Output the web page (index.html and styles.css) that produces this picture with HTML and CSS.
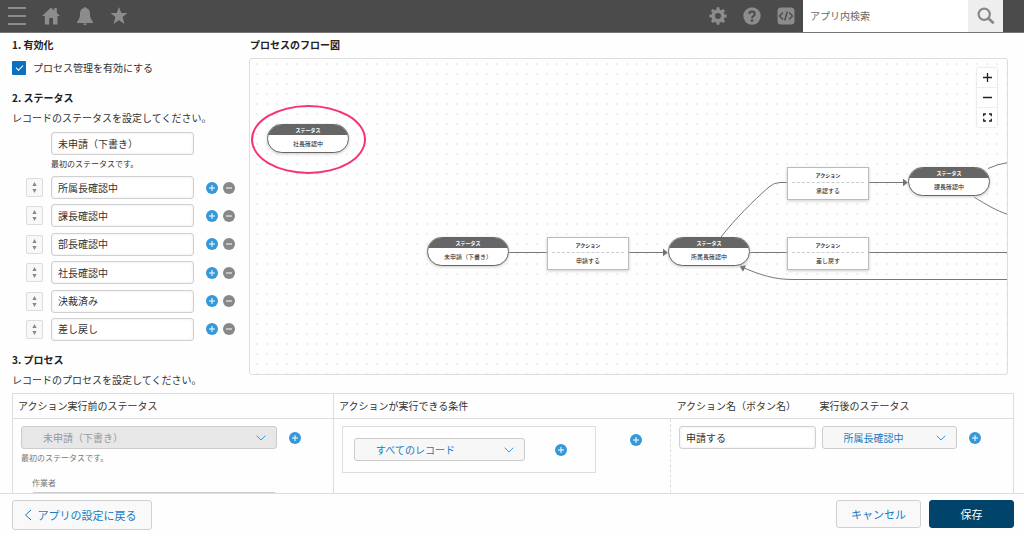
FILE: index.html
```html
<!DOCTYPE html>
<html lang="ja">
<head>
<meta charset="utf-8">
<meta name="viewport" content="width=device-width, initial-scale=1">
<title>プロセス管理</title>
<link rel="stylesheet" href="styles.css">
</head>
<body>
<svg class="defs" width="0" height="0" aria-hidden="true">
  <symbol id="plus" viewBox="0 0 12 12"><circle cx="6" cy="6" r="6" fill="#3498db"/><path d="M6 3v6M3 6h6" stroke="#fff" fill="none"/></symbol>
  <symbol id="minus" viewBox="0 0 12 12"><circle cx="6" cy="6" r="6" fill="#888"/><path d="M3 6h6" stroke="#fff" fill="none"/></symbol>
  <symbol id="sort" viewBox="0 0 17 19"><path d="M6.400 8 8.500 4 10.600 8zM6.400 11 8.500 15 10.600 11z" fill="#888"/></symbol>
  <symbol id="chevron" viewBox="0 0 10 6"><path d="M.7.7 5 5 9.300.7" fill="none" stroke="#3498db"/></symbol>
</svg>

<header class="topbar">
  <nav class="topbar-group" aria-label="メイン">
    <button class="icon-button" aria-label="メニュー"><svg width="18" height="18" viewBox="0 0 18 18"><path d="M0 1h18M0 9h18M0 17h18" stroke="currentColor" stroke-width="2"/></svg></button>
    <button class="icon-button" aria-label="ホーム"><svg width="18" height="18" viewBox="0 0 18 18"><path d="M9 .5 12.200 3.500V1h2.600v4.800L18 9h-2.500v8.500H11V11H7.200v6.500H2.800V9H0z" fill="currentColor"/></svg></button>
    <button class="icon-button" aria-label="通知"><svg width="18" height="18" viewBox="0 0 18 18"><path d="M8 1a1 1 0 0 1 2 0c3 .6 4 3 4 5.500 0 4 1 6 3 8.500v1H1v-1c2-2.500 3-4.500 3-8.500C4 4 5 1.600 8 1zM7.300 16.500h3.400c0 1-.7 1.500-1.700 1.500s-1.700-.5-1.700-1.500z" fill="currentColor"/></svg></button>
    <button class="icon-button" aria-label="お気に入り"><svg width="18" height="18" viewBox="0 0 18 18"><path d="m9 0 2.300 6h6.200l-4.900 4.100 1.900 6.900L9 13.300 3.500 17l1.900-6.900L.5 6h6.200z" fill="currentColor"/></svg></button>
  </nav>
  <div class="topbar-group topbar-tools">
    <button class="icon-button" aria-label="設定"><svg width="18" height="18" viewBox="-9 -9 18 18"><g fill="currentColor"><path d="M-1.800-6-1.300-8.700h2.600L1.800-6zM-1.800 6l.5 2.700h2.600L1.800 6z"/><path transform="rotate(45)" d="M-1.800-6-1.300-8.700h2.600L1.800-6zM-1.800 6l.5 2.700h2.600L1.800 6z"/><path transform="rotate(90)" d="M-1.800-6-1.300-8.700h2.600L1.800-6zM-1.800 6l.5 2.700h2.600L1.800 6z"/><path transform="rotate(135)" d="M-1.800-6-1.300-8.700h2.600L1.800-6zM-1.800 6l.5 2.700h2.600L1.800 6z"/></g><circle r="4.800" fill="none" stroke="currentColor" stroke-width="3.600"/></svg></button>
    <button class="icon-button" aria-label="ヘルプ"><svg width="18" height="18" viewBox="0 0 18 18"><circle cx="9" cy="9" r="8.700" fill="currentColor"/><path d="M6.300 7c0-3.300 5.400-3.300 5.400 0C11.700 9 9 8.900 9 11.200" fill="none" stroke="#4b4b4b" stroke-width="2"/><circle cx="9" cy="13.500" r="1.300" fill="#4b4b4b"/></svg></button>
    <button class="icon-button" aria-label="開発者向け"><svg width="18" height="18" viewBox="0 0 18 18"><rect x=".5" y=".5" width="17" height="17" rx="3.500" fill="currentColor"/><path d="M6 5.500 2.500 9 6 12.500M12 5.500 15.500 9 12 12.500M10.300 4.500 7.700 13.500" fill="none" stroke="#4b4b4b" stroke-width="1.400"/></svg></button>
  </div>
  <form class="search" role="search">
    <input class="search-input" type="search" aria-label="アプリ内検索" placeholder="アプリ内検索">
    <button class="search-button" type="button" aria-label="検索"><svg width="18" height="18" viewBox="0 0 18 18"><circle cx="7.200" cy="7.200" r="5.600" fill="none" stroke="currentColor" stroke-width="2.200"/><path d="m11 11 5.700 5.300" stroke="currentColor" stroke-width="2.800"/></svg></button>
  </form>
</header>

<main class="content">
  <div class="overview">
    <div class="settings">
      <h2 class="heading">1. 有効化</h2>
      <label class="enable"><input class="enable-box" type="checkbox" checked>プロセス管理を有効にする</label>
      <h2 class="heading heading-status">2. ステータス</h2>
      <p class="lead">レコードのステータスを設定してください。</p>
      <div class="first-status">
        <input class="text-input" aria-label="最初のステータス" value="未申請（下書き）">
        <p class="note">最初のステータスです。</p>
      </div>
      <ul class="status-list">
        <li class="status-row"><button class="handle" aria-label="並べ替え"><svg width="17" height="19"><use href="#sort"/></svg></button><input class="text-input" aria-label="ステータス 2" value="所属長確認中"><button class="round add" aria-label="追加"><svg width="12" height="12"><use href="#plus"/></svg></button><button class="round" aria-label="削除"><svg width="12" height="12"><use href="#minus"/></svg></button></li>
        <li class="status-row"><button class="handle" aria-label="並べ替え"><svg width="17" height="19"><use href="#sort"/></svg></button><input class="text-input" aria-label="ステータス 3" value="課長確認中"><button class="round add" aria-label="追加"><svg width="12" height="12"><use href="#plus"/></svg></button><button class="round" aria-label="削除"><svg width="12" height="12"><use href="#minus"/></svg></button></li>
        <li class="status-row"><button class="handle" aria-label="並べ替え"><svg width="17" height="19"><use href="#sort"/></svg></button><input class="text-input" aria-label="ステータス 4" value="部長確認中"><button class="round add" aria-label="追加"><svg width="12" height="12"><use href="#plus"/></svg></button><button class="round" aria-label="削除"><svg width="12" height="12"><use href="#minus"/></svg></button></li>
        <li class="status-row"><button class="handle" aria-label="並べ替え"><svg width="17" height="19"><use href="#sort"/></svg></button><input class="text-input" aria-label="ステータス 5" value="社長確認中"><button class="round add" aria-label="追加"><svg width="12" height="12"><use href="#plus"/></svg></button><button class="round" aria-label="削除"><svg width="12" height="12"><use href="#minus"/></svg></button></li>
        <li class="status-row"><button class="handle" aria-label="並べ替え"><svg width="17" height="19"><use href="#sort"/></svg></button><input class="text-input" aria-label="ステータス 6" value="決裁済み"><button class="round add" aria-label="追加"><svg width="12" height="12"><use href="#plus"/></svg></button><button class="round" aria-label="削除"><svg width="12" height="12"><use href="#minus"/></svg></button></li>
        <li class="status-row"><button class="handle" aria-label="並べ替え"><svg width="17" height="19"><use href="#sort"/></svg></button><input class="text-input" aria-label="ステータス 7" value="差し戻し"><button class="round add" aria-label="追加"><svg width="12" height="12"><use href="#plus"/></svg></button><button class="round" aria-label="削除"><svg width="12" height="12"><use href="#minus"/></svg></button></li>
      </ul>
      <h2 class="heading heading-process">3. プロセス</h2>
      <p class="lead">レコードのプロセスを設定してください。</p>
    </div>

    <section class="flow">
      <h2 class="heading">プロセスのフロー図</h2>
      <div class="canvas">
        <svg class="edges" aria-hidden="true">
          <g fill="none" stroke="#777">
            <path d="M259 193.500H298M379 193.500H415M500 193.500H538M619 193.500H758M619 123.500H655"/>
            <path d="M471 178C485 160 503 142 519 128Q524 123.500 530 123.500H538"/>
            <path d="M738 109.500Q748 105 758 103.500M724 138C735 145 747 152 758 155.500"/>
            <path d="M758 220.500H543C524 220.500 511 216 494 209"/>
          </g>
          <path d="M418 193.500 413 189.700v7.600zM658 123.500 653 119.700v7.600zM489.500 207l6.500-.8-3 6.500z" fill="#707070"/>
        </svg>
        <div class="node status n-president"><b class="node-kind">ステータス</b><span class="node-name">社長確認中</span></div>
        <div class="node status n-draft"><b class="node-kind">ステータス</b><span class="node-name">未申請（下書き）</span></div>
        <div class="node action n-apply"><b class="node-kind">アクション</b><span class="node-name">申請する</span></div>
        <div class="node status n-head"><b class="node-kind">ステータス</b><span class="node-name">所属長確認中</span></div>
        <div class="node action n-approve"><b class="node-kind">アクション</b><span class="node-name">承認する</span></div>
        <div class="node action n-return"><b class="node-kind">アクション</b><span class="node-name">差し戻す</span></div>
        <div class="node status n-section"><b class="node-kind">ステータス</b><span class="node-name">課長確認中</span></div>
        <div class="highlight"></div>
        <div class="zoom-controls">
          <button class="zoom-button" aria-label="拡大"><svg width="9" height="9"><path d="M4.500 0v9M0 4.500h9" stroke="#222" stroke-width="1.300"/></svg></button>
          <button class="zoom-button" aria-label="縮小"><svg width="9" height="9"><path d="M0 4.500h9" stroke="#222" stroke-width="1.300"/></svg></button>
          <button class="zoom-button" aria-label="全体表示"><svg width="9" height="9"><path d="M3 1H.7v2.300M6 1h2.300v2.300M3 8H.7V5.700M6 8h2.300V5.700" fill="none" stroke="#222" stroke-width="1.300"/></svg></button>
        </div>
      </div>
    </section>
  </div>

  <table class="process">
    <colgroup><col class="col-before"><col class="col-condition"><col class="col-action"><col></colgroup>
    <thead>
      <tr><th class="ruled">アクション実行前のステータス</th><th>アクションが実行できる条件</th><th>アクション名（ボタン名）</th><th>実行後のステータス</th></tr>
    </thead>
    <tbody>
      <tr>
        <td class="ruled cell-before">
          <div class="line">
            <span class="picker picker-wide"><select aria-label="アクション実行前のステータス" disabled><option>未申請（下書き）</option></select><svg class="chevron" width="10" height="6"><use href="#chevron"/></svg></span>
            <button class="round" aria-label="追加"><svg width="12" height="12"><use href="#plus"/></svg></button>
          </div>
          <p class="note note-soft">最初のステータスです。</p>
          <div class="worker"><p class="note note-soft">作業者</p><div class="worker-box"></div></div>
        </td>
        <td class="cell-condition">
          <div class="line line-top">
            <div class="condition">
              <span class="picker picker-mid"><select aria-label="アクションが実行できる条件"><option>すべてのレコード</option></select><svg class="chevron" width="10" height="6"><use href="#chevron"/></svg></span>
              <button class="round" aria-label="条件を追加"><svg width="12" height="12"><use href="#plus"/></svg></button>
            </div>
            <button class="round condition-add" aria-label="追加"><svg width="12" height="12"><use href="#plus"/></svg></button>
          </div>
        </td>
        <td class="cell-action"><input class="text-input action-input" aria-label="アクション名（ボタン名）" value="申請する"></td>
        <td class="cell-after">
          <div class="line">
            <span class="picker picker-small"><select aria-label="実行後のステータス"><option>所属長確認中</option></select><svg class="chevron" width="10" height="6"><use href="#chevron"/></svg></span>
            <button class="round" aria-label="追加"><svg width="12" height="12"><use href="#plus"/></svg></button>
          </div>
        </td>
      </tr>
    </tbody>
  </table>
</main>

<footer class="footer">
  <button class="button button-back"><svg width="8" height="12"><path d="M7 1 1.500 6 7 11" fill="none" stroke="currentColor"/></svg>アプリの設定に戻る</button>
  <button class="button">キャンセル</button>
  <button class="button button-primary">保存</button>
</footer>
</body>
</html>
```
FILE: styles.css
```css
* { box-sizing: border-box; }

body {
  display: flex;
  flex-direction: column;
  height: 100vh;
  margin: 0;
  overflow: hidden;
  background: #fefefe;
  color: #333;
  font: 10px/14px "Noto Sans CJK JP", sans-serif;
}

h2, p, ul { margin: 0; padding: 0; }
button, input, select { margin: 0; padding: 0; border: 0; font: inherit; color: inherit; }
button { background: none; }
svg { display: block; flex: none; }
.defs { position: absolute; }

/* Top bar */
.topbar {
  display: flex;
  flex: none;
  height: 33px;
  padding-right: 21px;
  background: #4b4b4b;
  border-bottom: 1px solid #777;
}
.topbar-group { display: flex; align-items: center; gap: 16px; padding-left: 8px; }
.topbar-tools { margin-left: auto; padding-right: 8px; }
.icon-button { color: #8c8c8c; }
.search { display: flex; }
.search-input { width: 165px; padding: 0 7px; border-radius: 0; background: #fff; outline: 0; appearance: none; }
.search-input::placeholder { color: #666; opacity: 1; }
.search-button { display: flex; align-items: center; justify-content: center; width: 35px; background: #eee; color: #888; }

/* Page body */
.content { flex: 1; min-height: 0; overflow: hidden; padding: 5px 10px 0 12px; }
.overview { display: flex; }
.settings { flex: none; width: 238px; }
.heading { font-size: 10px; line-height: 14px; font-weight: 700; color: #222; }
.heading-status { margin-top: 16px; }
.heading-process { margin-top: 12px; }
.lead { margin-top: 6px; }
.enable { display: flex; align-items: center; gap: 7px; margin-top: 9px; }
.enable-box {
  appearance: none;
  display: grid;
  place-items: center;
  width: 14px;
  height: 14px;
  border-radius: 1px;
  background: #0b70bf;
}
.enable-box:checked::before {
  content: "";
  width: 6px;
  height: 3px;
  margin-bottom: 2px;
  border: solid #fff;
  border-width: 0 0 1px 1px;
  rotate: -45deg;
}
.first-status { margin: 7px 0 0 39px; }
.text-input {
  display: block;
  width: 143px;
  height: 23px;
  padding: 0 6px 1px;
  border: 1px solid #d0d0d0;
  border-radius: 3px;
  background: #fff;
  box-shadow: inset 0 0 3px #e8e8e8;
}
.note { margin-top: 3px; font-size: 8px; line-height: 12px; }
.note-soft { color: #777; }
.status-list {
  display: flex;
  flex-direction: column;
  justify-content: space-between;
  min-height: 165px;
  margin-top: 6px;
  list-style: none;
}
.status-row { display: flex; align-items: center; padding-left: 14px; }
.handle { margin-right: 8px; border-radius: 2px; background: #f7f8f9; box-shadow: inset 0 0 0 1px #dcdcdc; }
.round { flex: none; width: 12px; height: 12px; }
.add { margin: 0 5px 0 12px; }

/* Flow diagram */
.flow { flex: 1; min-width: 0; padding-right: 6px; }
.canvas {
  position: relative;
  height: 317px;
  margin: 6px 0 0 -1px;
  overflow: hidden;
  border: 1px solid #ddd;
  border-radius: 3px;
  background: radial-gradient(circle, #eee 0, #eee 1px, transparent 1px) 2px 0 / 10px 10px;
}
.edges { position: absolute; inset: 0; width: 100%; height: 100%; }
.node {
  position: absolute;
  display: flex;
  flex-direction: column;
  width: 82px;
  background: #fff;
  color: #222;
  font-size: 6px;
  text-align: center;
  box-shadow: 0 1px 3px #ccc;
}
.node-kind { font-size: 5px; line-height: 10px; }
.node-name { line-height: 17px; }
.status { overflow: hidden; border: 1px solid #666; border-radius: 15px; }
.status .node-kind { background: #666; color: #fff; }
.action { padding: 0 4px; border: 1px solid #bbb; }
.action .node-kind { line-height: 14px; border-bottom: 1px dashed #ccc; }
.action .node-name { line-height: 16px; }
.n-president { left: 17px; top: 65px; }
.n-draft { left: 177px; top: 178px; }
.n-apply { left: 297px; top: 178px; }
.n-head { left: 418px; top: 178px; }
.n-approve { left: 537px; top: 108px; }
.n-return { left: 537px; top: 178px; }
.n-section { left: 658px; top: 108px; }
.highlight {
  position: absolute;
  left: 1px;
  top: 46px;
  width: 115px;
  height: 69px;
  border: 2px solid #f8336f;
  border-radius: 50%;
}
.zoom-controls { position: absolute; top: 9px; right: 10px; box-shadow: 0 0 2px #ccc; }
.zoom-button {
  display: flex;
  align-items: center;
  justify-content: center;
  width: 20px;
  height: 19px;
  background: #fefefe;
}
.zoom-button + .zoom-button { height: 20px; border-top: 1px solid #eee; }

/* Process table */
.process {
  width: 100%;
  margin-top: 6px;
  border: 1px solid #ddd;
  border-collapse: collapse;
  table-layout: fixed;
}
.col-before { width: 321px; }
.col-condition { width: 337px; }
.col-action { width: 143px; }
.process th { height: 25px; padding: 0 5px; font-weight: 400; text-align: left; border-bottom: 1px solid #ddd; }
.process th:nth-child(n+3) { padding-left: 6px; }
.process td { height: 140px; padding: 7px 8px; vertical-align: top; }
.process .ruled { border-right: 1px solid #ddd; }
.process .cell-condition { border-right: 1px dashed #ddd; }
.process .cell-action { padding-right: 0; }
.line { display: flex; align-items: center; gap: 12px; }
.line-top { align-items: flex-start; gap: 34px; }
.picker { position: relative; display: block; }
.picker-wide { width: 256px; }
.picker-mid { width: 171px; }
.picker-small { width: 135px; }
.picker select {
  appearance: none;
  display: block;
  width: 100%;
  height: 23px;
  padding: 0 21px;
  border: 1px solid #ccc;
  border-radius: 3px;
  background: #f7f7f7;
  color: #187cc5;
  opacity: 1;
}
.picker select:disabled { background: #e7e7e7; color: #999; }
.chevron { position: absolute; right: 11px; top: 9px; pointer-events: none; }
.condition { display: flex; align-items: center; gap: 30px; width: 254px; padding: 11px; border: 1px solid #ddd; }
.condition-add { margin-top: 8px; }
.action-input { width: 137px; }
.worker { padding: 10px 0 0 11px; }
.worker-box { width: 244px; height: 23px; margin-top: 3px; border: 1px solid #ccc; border-radius: 2px; }

/* Footer */
.footer {
  display: flex;
  flex: none;
  align-items: flex-start;
  gap: 8px;
  padding: 6px 10px 4px 12px;
  border-top: 1px solid #ddd;
  background: #fefefe;
}
.button {
  display: flex;
  align-items: center;
  justify-content: center;
  gap: 6px;
  width: 85px;
  height: 28px;
  border: 1px solid #d0d0d0;
  border-radius: 3px;
  background: #f9f9f9;
  color: #187cc5;
  font-size: 11px;
}
.button-back { width: 140px; height: 30px; margin-right: auto; padding-right: 4px; }
.button-primary { border-color: #00446b; background: #00446b; color: #fff; }
```
